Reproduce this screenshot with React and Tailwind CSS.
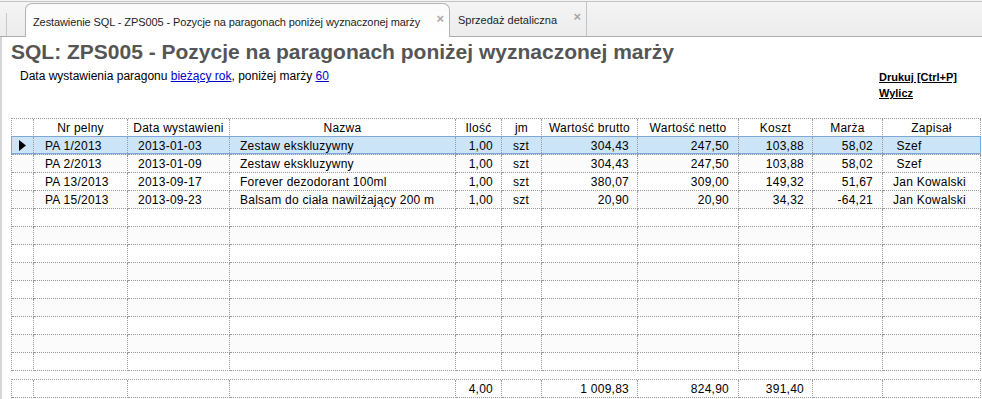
import React from "react";

const COLS = [
  { w: "w-[22px]", body: "justify-center", head: "justify-center" },
  { w: "w-[94px]", body: "pl-[11px]", head: "justify-center" },
  { w: "w-[102px]", body: "pl-[10px]", head: "justify-center" },
  { w: "w-[226px]", body: "pl-[10px]", head: "justify-center" },
  { w: "w-[46px]", body: "justify-end pr-[8px]", head: "justify-center" },
  { w: "w-[40px]", body: "pl-[11px]", head: "justify-center" },
  { w: "w-[96px]", body: "justify-end pr-[8px]", head: "justify-center" },
  { w: "w-[101px]", body: "justify-end pr-[9px]", head: "justify-center" },
  { w: "w-[74px]", body: "justify-end pr-[8px]", head: "justify-center" },
  { w: "w-[70px]", body: "justify-end pr-[9px]", head: "justify-center" },
  { w: "w-[98px]", body: "pl-[10px]", head: "justify-center" },
];

const HEADERS = [
  "",
  "Nr pelny",
  "Data wystawieni",
  "Nazwa",
  "Ilość",
  "jm",
  "Wartość brutto",
  "Wartość netto",
  "Koszt",
  "Marża",
  "Zapisał",
];

const ROWS = [
  ["PA 1/2013", "2013-01-03", "Zestaw ekskluzywny", "1,00", "szt", "304,43", "247,50", "103,88", "58,02", "\u00a0Szef"],
  ["PA 2/2013", "2013-01-09", "Zestaw ekskluzywny", "1,00", "szt", "304,43", "247,50", "103,88", "58,02", "\u00a0Szef"],
  ["PA 13/2013", "2013-09-17", "Forever dezodorant 100ml", "1,00", "szt", "380,07", "309,00", "149,32", "51,67", "Jan Kowalski"],
  ["PA 15/2013", "2013-09-23", "Balsam do ciała nawilżający 200 m", "1,00", "szt", "20,90", "20,90", "34,32", "-64,21", "Jan Kowalski"],
];

const TOTALS = ["", "", "", "", "4,00", "", "1 009,83", "824,90", "391,40", "", ""];

const EMPTY_ROWS = 9;

function Cell({ col, head, children }) {
  return (
    <div
      className={`${col.w} ${head ? col.head : col.body} flex items-center h-full shrink-0 overflow-hidden whitespace-nowrap border-r border-b border-dotted border-[#999999]`}
    >
      {children}
    </div>
  );
}

function Arrow() {
  return (
    <svg width="7" height="11" viewBox="0 0 7 11">
      <polygon points="0,0 7,5.5 0,11" fill="#000" />
    </svg>
  );
}

export default function App() {
  return (
    <div className="w-[982px] h-[399px] overflow-hidden bg-white text-black font-['Liberation_Sans',Arial,sans-serif]">
      {/* TAB BAR */}
      <div className="bg-[#f3f3f3] pt-px">
        <div className="h-[36px] flex items-end border-t border-b border-[#c4c4c4] border-b-[#acacac] bg-linear-to-b from-[#f4f4f4] to-[#ececec] text-[11px] text-[#1e1e1e]">
          <div className="ml-[6px] h-[23px] border-l border-[#c8c8c8]"></div>
          <div className="ml-[18px] -mb-px h-[34px] w-[425px] flex items-start bg-linear-to-b from-[#fbfbfb] to-white border-l border-t border-r border-[#b4b4b4] rounded-t-[7px]">
            <span className="mt-[10px] ml-[7px] tracking-[-0.1px]">
              Zestawienie SQL - ZPS005 - Pozycje na paragonach poniżej wyznaczonej marży
            </span>
            <span className="ml-auto mr-[5px] mt-[5px] text-[13px] font-bold text-[#a7a7a7]">×</span>
          </div>
          <div className="h-[34px] w-[137px] flex items-start border-r border-[#c4c4c4]">
            <span className="mt-[10px] ml-[8px]">Sprzedaż detaliczna</span>
            <span className="ml-auto mr-[5px] mt-[5px] text-[13px] font-bold text-[#a7a7a7]">×</span>
          </div>
        </div>
      </div>

      {/* CONTENT */}
      <div className="h-[362px] border-l-2 border-[#d6d6d6] flex flex-col">
        <h1 className="mt-[3px] pl-[9px] text-[21px] leading-[24px] font-bold text-[#555555]">
          SQL: ZPS005 - Pozycje na paragonach poniżej wyznaczonej marży
        </h1>

        <div className="mt-[5px] flex items-start">
          <p className="pl-[18px] text-[12px] leading-[14px]">
            Data wystawienia paragonu{" "}
            <a className="text-[#0000cc] underline">bieżący rok</a>, poniżej marży{" "}
            <a className="text-[#0000cc] underline">60</a>
          </p>
          <div className="ml-auto w-[103px] flex flex-col items-start text-[11px] leading-[16px] font-bold">
            <a className="underline">Drukuj [Ctrl+P]</a>
            <a className="underline">Wylicz</a>
          </div>
        </div>

        {/* GRID */}
        <div className="mt-[17px] ml-[9px] w-[970px] border-t border-l border-dotted border-[#999999] text-[12px] tracking-[0.25px]">
          {/* header */}
          <div className="flex h-[18px]">
            {COLS.map((col, i) => (
              <Cell key={i} col={col} head>
                {HEADERS[i]}
              </Cell>
            ))}
          </div>

          {/* data rows */}
          {ROWS.map((row, r) => (
            <div
              key={r}
              className={`relative flex h-[18px] ${r === 0 ? "bg-[#cce4f7]" : r % 2 === 1 ? "bg-[#fbfbfb]" : ""}`}
            >
              <Cell col={COLS[0]}>{r === 0 && <Arrow />}</Cell>
              {row.map((v, i) => (
                <Cell key={i} col={COLS[i + 1]}>
                  {v}
                </Cell>
              ))}
              {r === 0 && (
                <div className="absolute -top-px -left-px right-0 bottom-px border border-[#7ea7d8] pointer-events-none"></div>
              )}
            </div>
          ))}

          {/* empty rows */}
          {Array.from({ length: EMPTY_ROWS }).map((_, r) => (
            <div
              key={r}
              className={`flex h-[18px] ${(r + ROWS.length) % 2 === 1 ? "bg-[#fbfbfb]" : ""}`}
            >
              {COLS.map((col, i) => (
                <Cell key={i} col={col} />
              ))}
            </div>
          ))}
        </div>

        {/* totals */}
        <div className="mt-[8px] ml-[9px] w-[970px] border-t border-l border-dotted border-[#999999] text-[12px] tracking-[0.25px]">
          <div className="flex h-[18px]">
            {COLS.map((col, i) => (
              <Cell key={i} col={col}>
                {TOTALS[i]}
              </Cell>
            ))}
          </div>
        </div>
      </div>
    </div>
  );
}
